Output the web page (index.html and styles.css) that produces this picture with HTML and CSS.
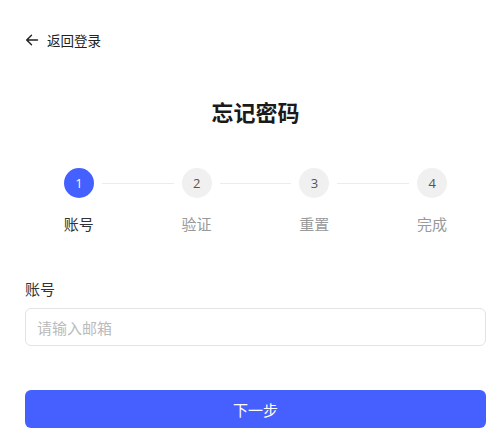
FILE: index.html
```html
<!DOCTYPE html>
<html lang="zh-CN">
<head>
<meta charset="utf-8">
<link rel="stylesheet" href="styles.css">
</head>
<body>
<div class="page">
  <a class="back" href="#">
    <svg class="back-icon" width="14" height="14" viewBox="0 0 14 14" fill="none" stroke="#222" stroke-width="1.4" stroke-linecap="round" stroke-linejoin="round"><path d="M12.5 7H1.8M6.5 2.2L1.7 7l4.8 4.8"/></svg>
    <span>返回登录</span>
  </a>
  <h1 class="title">忘记密码</h1>
  <div class="steps">
    <div class="step active"><div class="circle">1</div><div class="label">账号</div></div>
    <div class="step"><div class="circle">2</div><div class="label">验证</div></div>
    <div class="step"><div class="circle">3</div><div class="label">重置</div></div>
    <div class="step last"><div class="circle">4</div><div class="label">完成</div></div>
  </div>
  <div class="field">
    <label class="field-label">账号</label>
    <input class="input" type="text" placeholder="请输入邮箱">
  </div>
  <button class="btn">下一步</button>
</div>
</body>
</html>
```
FILE: styles.css
```css
* { box-sizing: border-box; }
html, body { margin: 0; padding: 0; background: #fff; }
body {
  font-family: "Noto Sans CJK SC", "Noto Sans", sans-serif;
  color: #333;
}
.page {
  padding: 30px 14px 0 25px;
}
.back {
  display: flex;
  align-items: center;
  gap: 8px;
  color: #222;
  text-decoration: none;
  font-size: 13.5px;
  line-height: 20px;
}
.back-icon { display: block; }
.title {
  margin: 46px 0 0;
  text-align: center;
  font-size: 22px;
  line-height: 30px;
  font-weight: 700;
  color: #1a1a1a;
}
.steps {
  display: grid;
  grid-template-columns: repeat(4, 1fr);
  margin: 42px -5px 0;
}
.step {
  position: relative;
  display: flex;
  flex-direction: column;
  align-items: center;
}
.step::after {
  content: "";
  position: absolute;
  top: 15px;
  left: calc(50% + 23px);
  width: calc(100% - 46px);
  height: 1px;
  background: #ececec;
}
.step.last::after { display: none; }
.circle {
  width: 30px;
  height: 30px;
  border-radius: 50%;
  background: #f0f0f0;
  color: #555;
  font-size: 13px;
  display: flex;
  align-items: center;
  justify-content: center;
  font-family: "Open Sans", "Noto Sans", sans-serif;
}
.step.active .circle {
  background: #4461ff;
  color: #fff;
}
.label {
  margin-top: 15px;
  font-size: 15px;
  line-height: 22px;
  color: #999;
}
.step.active .label { color: #333; }
.field { margin-top: 43px; }
.field-label {
  display: block;
  font-size: 15px;
  line-height: 22px;
  color: #333;
}
.input {
  display: block;
  width: 100%;
  height: 38px;
  margin-top: 8px;
  border: 1px solid #e3e3e3;
  border-radius: 6px;
  padding: 0 11px;
  font-family: inherit;
  font-size: 15px;
  color: #333;
  outline: none;
}
.input::placeholder { color: #bbb; }
.btn {
  display: block;
  width: 100%;
  height: 38px;
  margin-top: 44px;
  border: none;
  border-radius: 6px;
  background: #4560ff;
  color: #fff;
  font-family: inherit;
  font-size: 15px;
}
```
